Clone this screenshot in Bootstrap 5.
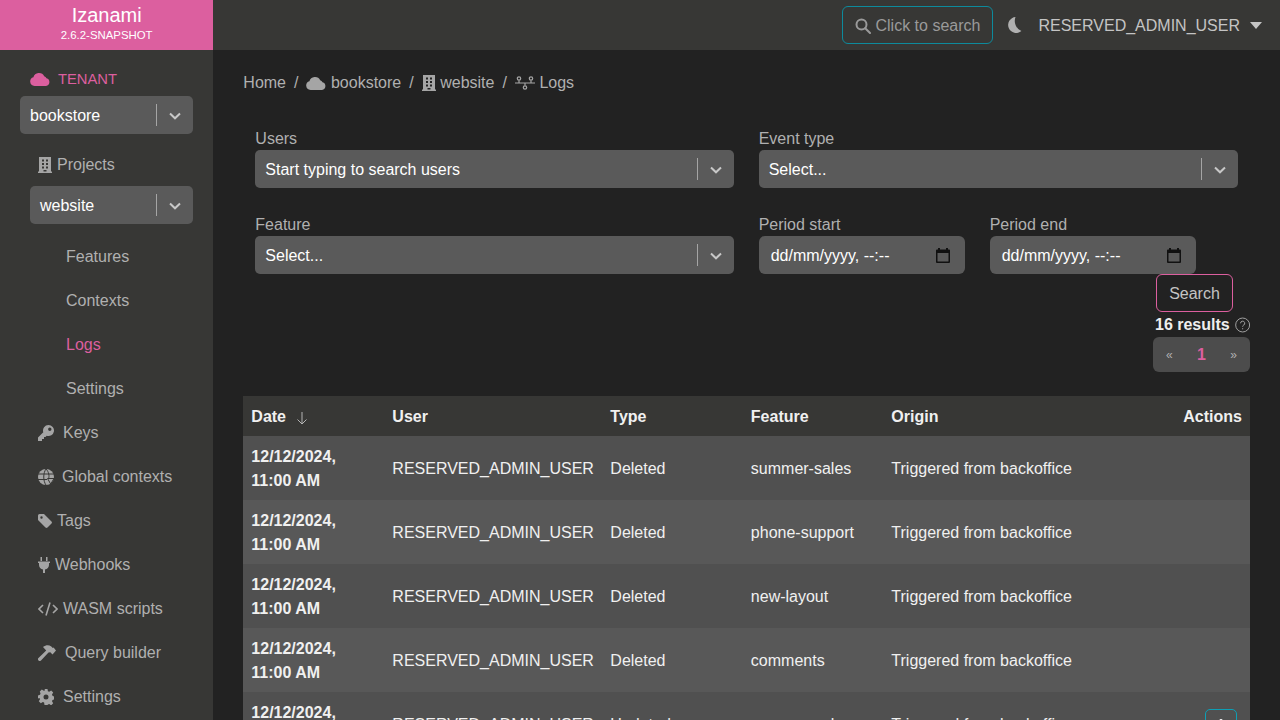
<!DOCTYPE html>
<html lang="en">
<head>
    <meta charset="UTF-8">
    <title>Logs - Izanami</title>
    <link href="https://cdn.jsdelivr.net/npm/bootstrap@5.3.3/dist/css/bootstrap.min.css" rel="stylesheet">
    <style>
        html, body { height: 100%; overflow: hidden; }
        body { background: #222222; color: #fff; font-family: "Liberation Sans", Arial, sans-serif; font-size: 16px; }
        .brand-box { width: 213.33px; height: 50px; background: #dc5f9f; line-height: 1; }
        .brand-name { font-size: 20px; margin-top: 5px; }
        .brand-ver { font-size: 11.4px; margin-top: 5px; }
        .top-bar { height: 50px; background: #373735; }
        .search-btn { width: 151px; height: 38px; margin-right: 13px; border: 1px solid #0d8a9c; border-radius: 6px; color: #9a9a9a; padding-top: 1px; }
        .moon-icon { margin-right: 16px; }
        .user-name { color: #c4c4c4; margin-right: 10px; padding-top: 2px; }
        .caret-down { width: 0; height: 0; margin-right: 18px; border-left: 6px solid transparent; border-right: 6px solid transparent; border-top: 7px solid #c4c4c4; }
        .side-col { width: 213.33px; height: 670px; background: #373735; padding-top: 17px; color: #b0b0b0; }
        .tenant-line { color: #dc5f9f; margin-left: 30px; height: 24px; font-size: 14.75px; }
        .fake-select { height: 38px; background: #5a5a5a; border-radius: 5px; color: #fff; padding-left: 10px; }
        .fake-select > span:first-child { padding-top: 2px; }
        .fake-select .sel-bar { width: 1px; height: 22px; background: #a5a5a5; margin-left: auto; }
        .fake-select .sel-arrow { width: 36px; }
        .side-sel { width: 173px; margin-left: 20px; margin-top: 5px; }
        .side-sel.sub-sel { width: 163px; margin-left: 30px; margin-top: 0; }
        .side-item { height: 44px; color: #b0b0b0; padding-left: 38px; padding-top: 2px; gap: 5px; }
        .side-item.projects-item { margin-top: 8px; }
        .side-item.wide-gap { gap: 9px; }
        .side-item.globe-item { gap: 8px; }
        .side-item.sub-item { padding-left: 66px; }
        .side-item.active-item { color: #dc5f9f; }
        .side-nav-list { margin-top: 10px; }
        .main-col { width: 1066.67px; padding: 0 30px; height: 670px; overflow: hidden; }
        .crumbs { height: 24px; margin-top: 21px; color: #b0b0b0; }
        .crumbs .sep { margin: 0 8px; }
        .crumbs svg { margin-right: 4.5px; }
        .filter-zone { padding: 0 12px; margin-top: 31px; position: relative; }
        .field-label { color: #b0b0b0; height: 24px; display: block; line-height: 26px; margin-bottom: 0; }
        .wide-field { width: 479px; }
        .filter-row { gap: 24.33px; margin-bottom: 24px; height: 62px; }
        .date-field { width: 206px; }
        .date-pair { gap: 25px; }
        .date-box { height: 38px; background: #5a5a5a; border-radius: 6px; padding: 0 15px 0 12px; font-size: 16px; }
        .date-box > span { padding-top: 2px; }
        .after-row { margin-top: -24px; display: flex; flex-direction: column; align-items: flex-end; height: 98px; margin-right: -12px; }
        .search-go { width: 77px; height: 38px; border: 1px solid #dc5f9f; border-radius: 6px; color: #c4c4c4; background: transparent; margin-right: 17px; padding: 2px 0 0; font-size: 16px; }
        .result-count { width: 95px; height: 24px; font-weight: 700; color: #eee; margin-top: 1px; line-height: 24px; white-space: nowrap; gap: 5px; }
        .pager-box { width: 97px; height: 36px; background: #4c4c4c; border-radius: 6px; color: #b0b0b0; font-size: 12px; padding: 1px 13px 0; }
        .pager-box b { color: #dc5f9f; font-size: 16px; }
        .log-table { margin-top: 24px; width: 1006.67px; table-layout: fixed; border-collapse: collapse; color: #f0f0f0; }
        .log-table th { background: #373735; height: 40px; padding: 2px 8px 0; font-weight: 700; }
        .log-table td { height: 64px; padding: 2px 8px 0; vertical-align: middle; line-height: 24px; }
        .log-table td:first-child { font-weight: 700; }
        .log-table tbody tr:nth-child(odd) td { background: #505050; }
        .log-table tbody tr:nth-child(even) td { background: #585858; }
        .sort-arrow { margin-left: 6px; }
        .row-action { width: 32px; height: 32px; border: 1px solid #0d9fb5; border-radius: 5px; display: inline-flex; align-items: center; justify-content: center; margin-right: 5px; }
    </style>
</head>
<body>
<header class="d-flex top-bar">
    <div class="brand-box text-center text-white">
        <div class="brand-name">Izanami</div>
        <div class="brand-ver">2.6.2-SNAPSHOT</div>
    </div>
    <div class="d-flex align-items-center ms-auto">
        <div class="search-btn d-flex align-items-center justify-content-center gap-1">
            <svg width="16" height="16" viewBox="0 0 16 16" fill="none" stroke="#9a9a9a" stroke-width="2"><circle cx="6.5" cy="6.5" r="5"/><path d="M10.2 10.2 15 15" stroke-linecap="round"/></svg>
            <span>Click to search</span>
        </div>
        <svg class="moon-icon" width="16" height="18" viewBox="0 0 16 18"><path fill="#b0b0b0" d="M9.5 1A8 8 0 1 0 15.400 15 11 11 0 0 1 9.500 1Z"/></svg>
        <span class="user-name">RESERVED_ADMIN_USER</span>
        <span class="caret-down"></span>
    </div>
</header>
<div class="d-flex">
    <nav class="side-col flex-shrink-0">
        <div class="tenant-line d-flex align-items-center gap-2">
            <svg width="20" height="14" viewBox="0 0 20 14"><use href="#cloud-shape" fill="#dc5f9f"/></svg>
            <span>TENANT</span>
        </div>
        <div class="fake-select side-sel d-flex align-items-center">
            <span>bookstore</span><span class="sel-bar"></span>
            <span class="sel-arrow text-center"><svg width="12" height="8" viewBox="0 0 12 8" fill="none" stroke="#c8c8c8" stroke-width="2"><path d="M1 1.5 6 6.3 11 1.5"/></svg></span>
        </div>
        <div class="d-flex align-items-center side-item projects-item">
            <svg width="14" height="16" viewBox="0 0 14 16"><use href="#building-shape" fill="#a5a5a5"/></svg><span>Projects</span>
        </div>
        <div class="fake-select side-sel sub-sel d-flex align-items-center">
            <span>website</span><span class="sel-bar"></span>
            <span class="sel-arrow text-center"><svg width="12" height="8" viewBox="0 0 12 8" fill="none" stroke="#c8c8c8" stroke-width="2"><path d="M1 1.5 6 6.3 11 1.5"/></svg></span>
        </div>
        <div class="side-nav-list">
            <div class="d-flex align-items-center side-item sub-item">Features</div>
            <div class="d-flex align-items-center side-item sub-item">Contexts</div>
            <div class="d-flex align-items-center side-item sub-item active-item">Logs</div>
            <div class="d-flex align-items-center side-item sub-item">Settings</div>
            <div class="d-flex align-items-center side-item wide-gap">
                <svg width="16" height="16" viewBox="0 0 16 16"><path fill="#a5a5a5" fill-rule="evenodd" d="M10.500 0a5.500 5.500 0 1 1-1.800 10.700L7.500 12H6v2H4v2H0v-3.500L5.300 7.200A5.500 5.500 0 0 1 10.500 0Zm1.300 2.500a1.700 1.700 0 1 0 0 3.400 1.700 1.700 0 0 0 0-3.400Z"/></svg><span>Keys</span>
            </div>
            <div class="d-flex align-items-center side-item globe-item">
                <svg width="16" height="16" viewBox="0 0 16 16"><circle cx="8" cy="8" r="8" fill="#a5a5a5"/><path stroke="#373735" fill="none" d="M0 5h16M0 10.500h9M8 0C5 4 5 12 8 16M8 0c3 3 3.500 7 2.500 10"/><path fill="#a5a5a5" stroke="#373735" d="M9.500 9.500h6.500l-3.300 5.500Z"/></svg><span>Global contexts</span>
            </div>
            <div class="d-flex align-items-center side-item">
                <svg width="14" height="14" viewBox="0 0 14 14"><path fill="#a5a5a5" fill-rule="evenodd" d="M0 1.500A1.500 1.500 0 0 1 1.500 0H6l7.500 7.500a1.500 1.500 0 0 1 0 2L9.500 13.500a1.500 1.500 0 0 1-2 0L0 6ZM3.500 2.300a1.200 1.200 0 1 0 0 2.400 1.200 1.200 0 0 0 0-2.400Z"/></svg><span>Tags</span>
            </div>
            <div class="d-flex align-items-center side-item">
                <svg width="12" height="16" viewBox="0 0 12 16"><path fill="#a5a5a5" d="M2.500 0h1.500v4H2.500ZM8 0h1.500v4H8ZM0 4.500h12v1.500h-1v2a5 5 0 0 1-4 4.500V16H5v-3.500a5 5 0 0 1-4-4.500V6H0Z"/></svg><span>Webhooks</span>
            </div>
            <div class="d-flex align-items-center side-item">
                <svg width="20" height="14" viewBox="0 0 20 14" fill="none" stroke="#a5a5a5" stroke-width="1.600"><path d="M5 3 1 7l4 4M15 3l4 4-4 4M12 0.500 8 13.500"/></svg><span>WASM scripts</span>
            </div>
            <div class="d-flex align-items-center side-item wide-gap">
                <svg width="18" height="16" viewBox="0 0 18 16"><path fill="#a5a5a5" d="M0.500 13 8.200 5.400 5 2C8 -.3 11 -.3 13.300 1.500L14.800 3 15.600 2.600 18 5.500 14.500 9.500 12.300 7.300 10.500 7.600 3 15.500A1.700 1.700 0 0 1 .5 13Z"/></svg><span>Query builder</span>
            </div>
            <div class="d-flex align-items-center side-item wide-gap">
                <svg width="16" height="16" viewBox="0 0 16 16"><path fill="#a5a5a5" fill-rule="evenodd" d="M6.500 0h3l.4 2.200 1.300.6L13.200 1.500l2 2-1.200 2 .5 1.300 1.500.7v3l-1.500.5-.5 1.300 1.200 2-2 2-2-1.200-1.300.5L9.500 16h-3l-.4-2.400-1.300-.5-2 1.200-2-2 1.200-2-.5-1.300L0 9.500v-3l2-.7.500-1.300-.7-2 2-2 2 1.300 1.300-.6ZM8 5.500a2.500 2.500 0 1 0 0 5 2.500 2.500 0 0 0 0-5Z"/></svg><span>Settings</span>
            </div>
        </div>
    </nav>
    <main class="main-col">
        <div class="crumbs d-flex align-items-center">
            <span>Home</span><span class="sep">/</span>
            <svg width="20" height="14" viewBox="0 0 20 14"><use href="#cloud-shape" fill="#a5a5a5"/></svg><span>bookstore</span><span class="sep">/</span>
            <svg width="14" height="16" viewBox="0 0 14 16"><use href="#building-shape" fill="#a5a5a5"/></svg><span>website</span><span class="sep">/</span>
            <svg width="20" height="14" viewBox="0 0 20 14" fill="none" stroke="#a5a5a5" stroke-width="1.200"><circle cx="4" cy="2.500" r="1.700"/><circle cx="16" cy="2.500" r="1.700"/><circle cx="10" cy="11.500" r="1.700"/><path d="M0 7h20M4 4.500V7M16 4.500V7M10 7v2.500"/></svg><span>Logs</span>
        </div>
        <div class="filter-zone">
            <div class="d-flex filter-row">
                <div class="wide-field flex-shrink-0">
                    <label class="field-label">Users</label>
                    <div class="fake-select d-flex align-items-center">
                        <span>Start typing to search users</span><span class="sel-bar"></span>
                        <span class="sel-arrow text-center"><svg width="12" height="8" viewBox="0 0 12 8" fill="none" stroke="#c8c8c8" stroke-width="2"><path d="M1 1.5 6 6.3 11 1.5"/></svg></span>
                    </div>
                </div>
                <div class="flex-grow-1">
                    <label class="field-label">Event type</label>
                    <div class="fake-select d-flex align-items-center">
                        <span>Select...</span><span class="sel-bar"></span>
                        <span class="sel-arrow text-center"><svg width="12" height="8" viewBox="0 0 12 8" fill="none" stroke="#c8c8c8" stroke-width="2"><path d="M1 1.5 6 6.3 11 1.5"/></svg></span>
                    </div>
                </div>
            </div>
            <div class="d-flex filter-row">
                <div class="wide-field flex-shrink-0">
                    <label class="field-label">Feature</label>
                    <div class="fake-select d-flex align-items-center">
                        <span>Select...</span><span class="sel-bar"></span>
                        <span class="sel-arrow text-center"><svg width="12" height="8" viewBox="0 0 12 8" fill="none" stroke="#c8c8c8" stroke-width="2"><path d="M1 1.5 6 6.3 11 1.5"/></svg></span>
                    </div>
                </div>
                <div class="d-flex date-pair">
                    <div class="date-field">
                        <label class="field-label">Period start</label>
                        <div class="date-box d-flex align-items-center justify-content-between">
                            <span>dd/mm/yyyy, --:--</span>
                            <svg width="14" height="15" viewBox="0 0 14 15"><path fill="#111" fill-rule="evenodd" d="M2 0h2v1.500h6V0h2v1.500h1a1 1 0 0 1 1 1V14a1 1 0 0 1-1 1H1a1 1 0 0 1-1-1V2.500a1 1 0 0 1 1-1h1ZM1.500 5v8.500h11V5Z"/></svg>
                        </div>
                    </div>
                    <div class="date-field">
                        <label class="field-label">Period end</label>
                        <div class="date-box d-flex align-items-center justify-content-between">
                            <span>dd/mm/yyyy, --:--</span>
                            <svg width="14" height="15" viewBox="0 0 14 15"><path fill="#111" fill-rule="evenodd" d="M2 0h2v1.500h6V0h2v1.500h1a1 1 0 0 1 1 1V14a1 1 0 0 1-1 1H1a1 1 0 0 1-1-1V2.500a1 1 0 0 1 1-1h1ZM1.500 5v8.500h11V5Z"/></svg>
                        </div>
                    </div>
                </div>
            </div>
            <div class="after-row">
                <button class="search-go" type="button">Search</button>
                <div class="result-count d-flex align-items-center">
                    <span>16 results</span>
                    <svg width="16" height="16" viewBox="0 0 16 16" fill="none" stroke="#a5a5a5"><circle cx="8" cy="8" r="7.300"/><path d="M5.800 6.200a2.200 2.200 0 1 1 3.300 1.900c-.7.400-1.100.8-1.100 1.700M8 11.300v1.200"/></svg>
                </div>
                <div class="pager-box d-flex align-items-center justify-content-between">
                    <span>«</span><b>1</b><span>»</span>
                </div>
            </div>
        </div>
        <table class="log-table">
            <colgroup>
                <col style="width:141px"><col style="width:218px"><col style="width:140.5px"><col style="width:140.5px"><col><col style="width:100px">
            </colgroup>
            <thead>
                <tr>
                    <th>Date <svg class="sort-arrow" width="12" height="14" viewBox="0 0 12 14" fill="none" stroke="#b4b4b4"><path d="M6 1v12M1.500 8.500 6 13l4.500-4.500"/></svg></th>
                    <th>User</th><th>Type</th><th>Feature</th><th>Origin</th><th class="text-end">Actions</th>
                </tr>
            </thead>
            <tbody>
                <tr><td>12/12/2024, 11:00 AM</td><td>RESERVED_ADMIN_USER</td><td>Deleted</td><td>summer-sales</td><td>Triggered from backoffice</td><td></td></tr>
                <tr><td>12/12/2024, 11:00 AM</td><td>RESERVED_ADMIN_USER</td><td>Deleted</td><td>phone-support</td><td>Triggered from backoffice</td><td></td></tr>
                <tr><td>12/12/2024, 11:00 AM</td><td>RESERVED_ADMIN_USER</td><td>Deleted</td><td>new-layout</td><td>Triggered from backoffice</td><td></td></tr>
                <tr><td>12/12/2024, 11:00 AM</td><td>RESERVED_ADMIN_USER</td><td>Deleted</td><td>comments</td><td>Triggered from backoffice</td><td></td></tr>
                <tr><td>12/12/2024, 11:00 AM</td><td>RESERVED_ADMIN_USER</td><td>Updated</td><td>summer-sales</td><td>Triggered from backoffice</td><td class="text-end"><span class="row-action"><svg width="12" height="12" viewBox="0 0 12 12" fill="none" stroke="#eee" stroke-width="2"><path d="M1 5.500 6 .7 11 5.500"/></svg></span></td></tr>
            </tbody>
        </table>
    </main>
</div>
<svg width="0" height="0" class="position-absolute">
    <defs>
        <path id="cloud-shape" d="M4.500 14A4.500 4.500 0 0 1 3.400 5.200 5.800 5.800 0 0 1 14.200 4.200 3.800 3.800 0 0 1 16.500 6.200 4 4 0 0 1 16 14Z"/>
        <path id="building-shape" fill-rule="evenodd" d="M1 0h12v14.500h1V16H0v-1.500h1ZM4 2.500v2h2v-2Zm4 0v2h2v-2ZM4 6v2h2V6Zm4 0v2h2V6ZM4 9.500v2h2v-2Zm4 0v2h2v-2ZM5.500 13v1.500h3V13Z"/>
    </defs>
</svg>
<script src="https://cdn.jsdelivr.net/npm/bootstrap@5.3.3/dist/js/bootstrap.bundle.min.js"></script>
</body>
</html>
